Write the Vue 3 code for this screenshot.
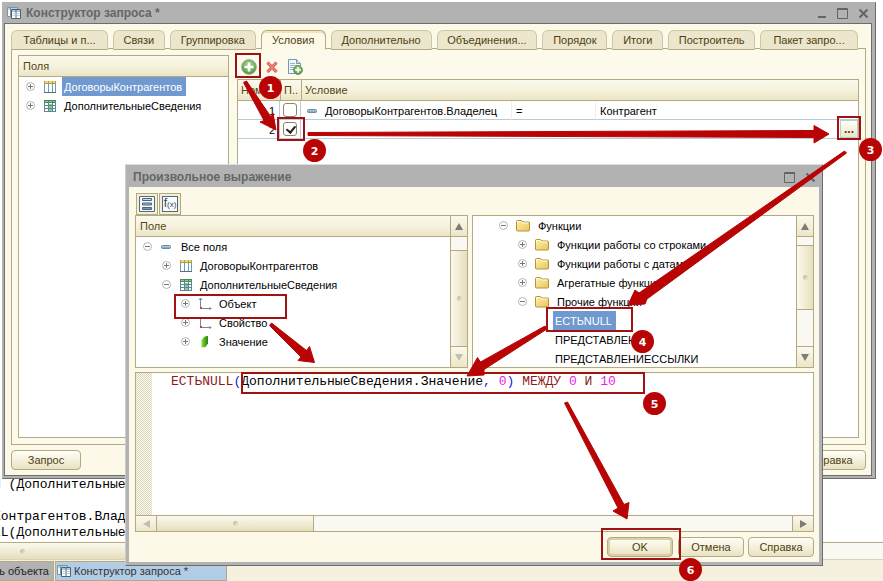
<script setup>
import { ref } from 'vue'

const tabs = ['Таблицы и п...', 'Связи', 'Группировка', 'Условия', 'Дополнительно', 'Объединения...', 'Порядок', 'Итоги', 'Построитель', 'Пакет запро...']
const activeTab = ref('Условия')

const sourceFields = [
  { text: 'ДоговорыКонтрагентов', icon: 'table', mark: 'plus', level: 0, selected: true },
  { text: 'ДополнительныеСведения', icon: 'grid', mark: 'plus', level: 0 }
]

const fields = [
  { text: 'Все поля', icon: 'dash', mark: 'minus', level: 0 },
  { text: 'ДоговорыКонтрагентов', icon: 'table', mark: 'plus', level: 1 },
  { text: 'ДополнительныеСведения', icon: 'grid', mark: 'minus', level: 1 },
  { text: 'Объект', icon: 'axis', mark: 'plus', level: 2 },
  { text: 'Свойство', icon: 'axis', mark: 'plus', level: 2 },
  { text: 'Значение', icon: 'leaf', mark: 'plus', level: 2 }
]

const functions = [
  { text: 'Функции', icon: 'folder', mark: 'minus', level: 0 },
  { text: 'Функции работы со строками', icon: 'folder', mark: 'plus', level: 1 },
  { text: 'Функции работы с датами', icon: 'folder', mark: 'plus', level: 1 },
  { text: 'Агрегатные функции', icon: 'folder', mark: 'plus', level: 1 },
  { text: 'Прочие функции', icon: 'folder', mark: 'minus', level: 1 },
  { text: 'ЕСТЬNULL', level: 2, selected: true },
  { text: 'ПРЕДСТАВЛЕНИЕ', level: 2 },
  { text: 'ПРЕДСТАВЛЕНИЕССЫЛКИ', level: 2 }
]

const useFirst = ref(false)
const useSecond = ref(true)

const frames = [
  [236, 54, 24, 23], [278, 118, 26, 22], [838, 117, 22, 22], [175, 295, 111, 23],
  [547, 308, 85, 23], [242, 373, 402, 20], [602, 529, 78, 30]
]

const arrows = [
  '243.5,82.5 246.5,81 271,117 273,113 276,130 260,122 264,120.5',
  '308,132.5 814,130.5 814,125.5 829,134 814,143 814,137.5 308,135.5',
  '844.5,151 846.5,153 647,299 645,304 628,305 635,290 639,293',
  '545,326 547,329 484,369.5 484,375 467,376 477.5,357.5 480.5,362',
  '269.5,325.5 271.5,323 306.5,350.5 309.5,346.5 314.5,362.5 298,360.5 301,357',
  '564.5,403 567.5,402 624,504.5 629,502.5 627,519 613,511 618,508'
]

const badges = [
  [270.5, 87.5], [314.5, 150.5], [870.5, 149.5], [642.5, 341.5], [654.5, 403.5], [690.5, 569.5]
]
</script>

<template>
  <div class="desktop">
    <svg class="defs" aria-hidden="true">
      <defs>
        <linearGradient id="g-blue" x1="0" y1="0" x2="0" y2="1"><stop offset="0" stop-color="#cfe2ee" /><stop offset="1" stop-color="#6b93af" /></linearGradient>
        <linearGradient id="g-fold" x1="0" y1="0" x2="1" y2="1"><stop offset="0" stop-color="#fff0a8" /><stop offset="1" stop-color="#e8c65a" /></linearGradient>
        <radialGradient id="g-green" cx=".5" cy=".35" r=".65"><stop offset="0" stop-color="#b4dc98" /><stop offset="1" stop-color="#4d9440" /></radialGradient>
        <linearGradient id="g-leaf" x1="0" y1="0" x2="1" y2="0"><stop offset="0" stop-color="#8fdc3c" /><stop offset=".55" stop-color="#4fae1c" /><stop offset="1" stop-color="#2c7d10" /></linearGradient>
      </defs>
      <symbol id="i-plus" viewBox="0 0 9 9"><circle cx="4.500" cy="4.500" r="4" fill="#fff" stroke="#b4b4b4" /><path d="M2 4.500h5M4.500 2v5" stroke="#777" /></symbol>
      <symbol id="i-minus" viewBox="0 0 9 9"><circle cx="4.500" cy="4.500" r="4" fill="#fff" stroke="#b4b4b4" /><path d="M2 4.500h5" stroke="#777" /></symbol>
      <symbol id="i-dash" viewBox="0 0 14 14"><rect x="1.500" y="5.500" width="9" height="3" rx="1" fill="url(#g-blue)" stroke="#6a8ca4" /></symbol>
      <symbol id="i-table" viewBox="0 0 14 14"><path d="M1 3h12v10H1z" fill="#fff" /><path d="M1.500 3v10M5.500 3v10M9.500 3v10M12.500 3v10" stroke="#6f9bb0" /><path d="M1 12.500h12" stroke="#4f7385" /><path d="M1 1h12v3H1z" fill="#b39c4a" /><path d="M2 1h3v2H2zM6 1h3v2H6zM10 1h2v2h-2z" fill="#f0d870" /></symbol>
      <symbol id="i-grid" viewBox="0 0 14 14"><path d="M1 1h12v12H1z" fill="#fff" /><path d="M1 1h12v3H1z" fill="#438a54" /><path d="M2 2h3v1H2zM6 2h3v1H6zM10 2h2v1h-2z" fill="#8ccc92" /><path d="M1.500 3v10M5.500 3v10M9.500 3v10M12.500 3v10M1 6.500h12M1 9.500h12M1 12.500h12" stroke="#5d8790" /><path d="M6 5h3v1H6zM6 7h3v2H6zM6 10h3v2H6z" fill="#8fc99a" /></symbol>
      <symbol id="i-axis" viewBox="0 0 14 14"><path d="M2.500 1v10M3 11.500h10M1 3l1.500-2L4 3M11.500 10l1.500 1.500-1.500 1.500" fill="none" stroke="#7b8994" /><path d="M2 10h2v2H2z" fill="#d8402c" /></symbol>
      <symbol id="i-leaf" viewBox="0 0 14 14"><path d="M3.500 5l3-3.500 3.500-.5v7.500l-2.500 3.500-4 .5z" fill="url(#g-leaf)" /></symbol>
      <symbol id="i-folder" viewBox="0 0 16 14"><path d="M1.500 2.500q0-1 1-1h4l1.500 1.500h5.500q1 0 1 1v7q0 1-1 1h-11q-1 0-1-1z" fill="url(#g-fold)" stroke="#b8913c" /><path d="M2.500 4.500V2.500H6l1.500 1.500h5.500" fill="none" stroke="#fffbe0" /></symbol>
      <symbol id="i-query" viewBox="0 0 16 14"><path d="M1.500 1.500h10v9h-10z" fill="#f4f8fb" stroke="#7d93a3" /><path d="M2 2h9v2H2z" fill="#b8d0e2" /><path d="M4.500 2v8" stroke="#7d93a3" /><path d="M5.500 3.500h9v9h-9z" fill="#fff" stroke="#4c6576" /><path d="M6 4h8v2H6z" fill="#a9c6dc" /><path d="M10 4v8" stroke="#4c6576" /><path d="M6.500 7.500h3M11 7.500h3M6.500 9.500h3M11 9.500h3" stroke="#c2d2dd" /></symbol>
      <symbol id="i-add" viewBox="0 0 16 16"><circle cx="8" cy="8" r="7.300" fill="url(#g-green)" stroke="#7fa876" /><path d="M8 3.500v9M3.500 8h9" stroke="#fff" stroke-width="2.600" /></symbol>
      <symbol id="i-delete" viewBox="0 0 14 14"><path d="M2.500 2.500l9 9.500M11.500 2.500l-9 9.500" stroke="#d65346" stroke-width="3.200" /><path d="M2.500 2.500l9 9.500M11.500 2.500l-9 9.500" stroke="#ee8577" stroke-width="1.600" /></symbol>
      <symbol id="i-copy" viewBox="0 0 16 16"><path d="M1.500.5h8l4 4v10h-12z" fill="#f3f8fb" stroke="#7597aa" /><path d="M9.500.5v4h4" fill="#cfdfe8" stroke="#7597aa" /><path d="M3 4.500h5M3 6.500h8M3 8.500h6M3 10.500h5" stroke="#93b5c8" /><circle cx="11" cy="11" r="4.400" fill="url(#g-green)" stroke="#5f8c56" /><path d="M11 8.200v5.600M8.200 11h5.600" stroke="#fff" stroke-width="1.600" /></symbol>
      <symbol id="i-max" viewBox="0 0 11 11"><path d="M.5.5h10v10H.5zM0 1.500h11" fill="none" stroke="#646464" /></symbol>
      <symbol id="i-min" viewBox="0 0 11 11"><path d="M2 9h8" stroke="#646464" stroke-width="2" /></symbol>
      <symbol id="i-close" viewBox="0 0 11 11"><path d="M1.500 1.500l8 8M9.500 1.500l-8 8" stroke="#646464" stroke-width="2" /></symbol>
    </svg>

    <main class="backdrop">
      <pre class="source">И (ДополнительныеСведения

Контрагентов.Владелец
LL(ДополнительныеСведения</pre>
      <div class="hbar wide"><div class="thumb grip"></div></div>
    </main>
    <nav class="taskbar">
      <button class="task">ь объекта</button>
      <button class="task current"><svg class="ico16"><use href="#i-query" /></svg>Конструктор запроса *</button>
    </nav>

    <section class="window builder">
      <header class="title">
        <svg class="ico16"><use href="#i-query" /></svg>
        <h1>Конструктор запроса *</h1>
        <button class="sys" aria-label="Свернуть"><svg><use href="#i-min" /></svg></button>
        <button class="sys" aria-label="Развернуть"><svg><use href="#i-max" /></svg></button>
        <button class="sys" aria-label="Закрыть"><svg><use href="#i-close" /></svg></button>
      </header>
      <div class="client">
        <div class="tabs" role="tablist">
          <button v-for="t in tabs" :key="t" role="tab" class="tab" :class="{ active: t === activeTab }" :aria-selected="t === activeTab" @click="activeTab = t">{{ t }}</button>
        </div>
        <div class="page">
          <div class="pane source-pane">
            <div class="head">Поля</div>
            <ul class="tree">
              <li v-for="n in sourceFields" :key="n.text" :class="'level' + n.level">
                <svg class="mark"><use :href="'#i-' + n.mark" /></svg>
                <svg class="ico"><use :href="'#i-' + n.icon" /></svg>
                <span class="label" :class="{ selected: n.selected }">{{ n.text }}</span>
              </li>
            </ul>
          </div>
          <div class="conditions">
            <div class="toolbar">
              <button class="tool" aria-label="Добавить"><svg class="i16"><use href="#i-add" /></svg></button>
              <button class="tool" aria-label="Удалить"><svg class="i14"><use href="#i-delete" /></svg></button>
              <button class="tool" aria-label="Скопировать"><svg class="i16"><use href="#i-copy" /></svg></button>
            </div>
            <div class="pane table-pane">
              <table>
                <colgroup><col class="c-num"><col class="c-check"><col class="c-field"><col class="c-op"><col></colgroup>
                <thead>
                  <tr><th>Номер</th><th>П..</th><th colspan="3">Условие</th></tr>
                </thead>
                <tbody>
                  <tr>
                    <td class="num">1</td>
                    <td class="check"><input v-model="useFirst" type="checkbox" aria-label="Произвольное, строка 1"></td>
                    <td class="split"><div class="cell"><svg class="ico"><use href="#i-dash" /></svg>ДоговорыКонтрагентов.Владелец</div></td>
                    <td class="split">=</td>
                    <td>Контрагент</td>
                  </tr>
                  <tr>
                    <td class="num">2</td>
                    <td class="check"><input v-model="useSecond" type="checkbox" aria-label="Произвольное, строка 2"></td>
                    <td colspan="3" class="edit"><button class="choose" aria-label="Выбрать">...</button></td>
                  </tr>
                </tbody>
              </table>
            </div>
          </div>
        </div>
        <footer class="actions spread">
          <button class="btn">Запрос</button>
          <button class="btn">Справка</button>
        </footer>
      </div>
    </section>

    <section class="window dialog">
      <header class="title">
        <h2>Произвольное выражение</h2>
        <button class="sys" aria-label="Развернуть"><svg><use href="#i-max" /></svg></button>
        <button class="sys" aria-label="Закрыть"><svg><use href="#i-close" /></svg></button>
      </header>
      <div class="client">
        <div class="toggles">
          <button class="toggle" aria-label="Поля">
            <svg viewBox="0 0 16 16"><path d="M.5.5h15v15H.5z" fill="#f6f8fa" stroke="#56697a" /><g fill="url(#g-blue)" stroke="#47667c"><path d="M3.500 2.500h9v2h-9zM3.500 7h9v2h-9zM3.500 11.500h9v2h-9z" /></g></svg>
          </button>
          <button class="toggle fx" aria-label="Функции"><span>f<small>(x)</small></span></button>
        </div>
        <div class="lists">
          <div class="pane fields-pane">
            <div class="main">
              <div class="head">Поле</div>
              <ul class="tree">
                <li v-for="n in fields" :key="n.text" :class="'level' + n.level">
                  <svg class="mark"><use :href="'#i-' + n.mark" /></svg>
                  <svg class="ico"><use :href="'#i-' + n.icon" /></svg>
                  <span class="label">{{ n.text }}</span>
                </li>
              </ul>
            </div>
            <div class="vbar off"><i class="up"></i><div class="track"><div class="thumb grip late"></div></div><i class="down"></i></div>
          </div>
          <div class="pane functions-pane">
            <ul class="tree main">
              <li v-for="n in functions" :key="n.text" :class="['level' + n.level, { leaf: !n.icon }]">
                <template v-if="n.icon">
                  <svg class="mark"><use :href="'#i-' + n.mark" /></svg>
                  <svg class="ico16"><use href="#i-folder" /></svg>
                </template>
                <span class="label" :class="{ selected: n.selected }">{{ n.text }}</span>
              </li>
            </ul>
            <div class="vbar"><i class="up"></i><div class="track"><div class="thumb grip early"></div></div><i class="down"></i></div>
          </div>
        </div>
        <div class="pane editor">
          <div class="text">
            <div class="gutter"></div>
            <pre class="code" contenteditable="true" spellcheck="false" role="textbox" aria-label="Выражение"><b>ЕСТЬNULL</b><i>(</i>ДополнительныеСведения.Значение<i>,</i> <em>0</em><i>)</i> <b>МЕЖДУ</b> <em>0</em> <b>И</b> <em>10</em></pre>
          </div>
          <div class="hbar"><i class="left"></i><div class="track"><div class="thumb grip"></div></div><i class="right"></i></div>
        </div>
        <footer class="actions">
          <button class="btn default">OK</button>
          <button class="btn">Отмена</button>
          <button class="btn">Справка</button>
        </footer>
      </div>
    </section>

    <svg class="notes" viewBox="0 0 883 581">
      <rect v-for="(f, i) in frames" :key="'f' + i" :x="f[0]" :y="f[1]" :width="f[2]" :height="f[3]" />
      <polygon v-for="(a, i) in arrows" :key="'a' + i" :points="a" />
      <g v-for="(b, i) in badges" :key="'b' + i">
        <circle :cx="b[0]" :cy="b[1]" r="11.500" />
        <text :x="b[0]" :y="b[1] + 4">{{ i + 1 }}</text>
      </g>
    </svg>
  </div>
</template>

<style>
body { overflow: hidden; }
</style>

<style scoped>
* { box-sizing: border-box; }
.desktop {
  position: relative;
  display: flex;
  flex-direction: column;
  min-height: 100vh;
  overflow: hidden;
  background: #fff;
  color: #000;
  font: 11px/19px "Liberation Sans", Arial, sans-serif;
}
.defs { position: absolute; width: 0; height: 0; }
button { font: inherit; color: #4d3f12; padding: 0; margin: 0; border: 0; background: none; white-space: nowrap; }
h1, h2 { margin: 0; font-size: 12px; font-weight: bold; }
ul { list-style: none; margin: 0; padding: 0; }
pre { margin: 0; }
.ico { width: 14px; height: 14px; flex: none; }
.ico16 { width: 16px; height: 14px; flex: none; }

.backdrop { flex: 1; display: flex; flex-direction: column; justify-content: flex-end; overflow: hidden; }
.source { margin-left: -7px; font: 13px/16px "Liberation Mono", monospace; padding-bottom: 1px; }
.taskbar { display: flex; gap: 1px; height: 21px; padding-top: 1px; background: #f5f1de; }
.task { display: flex; align-items: center; justify-content: flex-end; width: 54px; padding-right: 4px; border: 1px solid #b3aa82; border-left: 0; background: #b2b2b2; color: #222; }
.task.current { justify-content: flex-start; gap: 2px; width: 172px; border-left: 1px solid #b3aa82; background: #b2cce6; color: #333; }

.window { position: absolute; display: flex; flex-direction: column; background: #b2b2b2; border: 1px solid #b2b2b2; border-right-color: #6e6e6e; border-bottom-color: #6e6e6e; }
.builder { left: 2px; right: 7px; top: 2px; bottom: 102px; padding: 0 3px 2px 1px; }
.dialog { left: 125px; right: 60px; top: 164px; bottom: 15px; padding: 0 3px 3px; border-top-color: #ddd; border-left-color: #ccc; }
.title { display: flex; align-items: center; height: 20px; padding: 0 1px 0 2px; gap: 5px; color: #666; }
.dialog .title { height: 22px; padding-left: 4px; padding-top: 2px; }
.title h1, .title h2 { flex: 1; }
.title .ico16 { margin-right: -1px; }
.sys { width: 16px; height: 14px; display: grid; place-items: center; }
.sys svg { width: 11px; height: 11px; }
.client { flex: 1; display: flex; flex-direction: column; min-height: 0; background: #fcf9e9; }
.builder .client { border: 1px solid #6e6e6e; padding: 6px 5px 5px 6px; }
.dialog .client { padding: 6px 5px 5px 6px; }

.tabs { display: grid; grid-template-columns: 97fr 52fr 86fr 65fr 101fr 101fr 65fr 51fr 87fr 98fr; gap: 5px; height: 19px; padding-right: 8px; position: relative; margin-bottom: -1px; }
.tab { border: 1px solid #cfc7a4; border-radius: 6px 6px 0 0; border-bottom-color: #b3aa82; background: #ece6cc; line-height: 18px; text-align: center; }
.tab.active { border-color: #b3aa82; border-bottom-color: #fcf9e9; background: #fcf9e9; box-shadow: inset 0 2px #f6e3b4; }
.page { flex: 1; display: flex; gap: 8px; min-height: 0; border: 1px solid #b3aa82; padding: 6px; background: #fcfaeb; }
.pane { border: 1px solid #b3aa82; background: #fff; overflow: hidden; }
.source-pane { flex: 0 0 211px; }
.conditions { flex: 1; display: flex; flex-direction: column; min-width: 0; }
.toolbar { display: flex; align-items: center; gap: 3px; height: 24px; padding-left: 2px; }
.tool { width: 20px; height: 24px; display: grid; place-items: center; }
.i16 { width: 16px; height: 16px; }
.i14 { width: 14px; height: 14px; }
.table-pane { flex: 1; }
.head, th { height: 21px; line-height: 20px; font-weight: normal; text-align: left; color: #54461a; padding: 0 4px; border-bottom: 1px solid #b3aa82; background: linear-gradient(#fbf9ec, #f6f2dc 50%, #ece6c6); }

.tree li { display: flex; align-items: center; height: 19px; padding-left: 7px; }
.tree .level1 { padding-left: 26px; }
.tree .level2 { padding-left: 45px; }
.mark { width: 9px; height: 9px; flex: none; margin-right: 8px; }
.label { padding: 0 2px; margin-left: 5px; height: 19px; line-height: 21px; white-space: nowrap; }
.label.selected { background: #6f99cf; color: #fff; padding-right: 4px; }
.functions-pane .tree li { padding-left: 26px; }
.functions-pane .tree .level1 { padding-left: 45px; }
.functions-pane .tree .leaf { padding-left: 75px; }
.functions-pane .ico16 { margin-left: -1px; }

table { width: 100%; border-collapse: separate; border-spacing: 0; table-layout: fixed; }
.c-num { width: 42px; }
.c-check { width: 21px; }
.c-field { width: 211px; }
.c-op { width: 84px; }
th { padding: 0 3px; white-space: nowrap; overflow: hidden; }
th + th { border-left: 1px solid #b3aa82; }
td { height: 19px; line-height: 16px; padding: 2px 4px 0; border-bottom: 1px solid #b9ccda; white-space: nowrap; }
td.num { text-align: right; border-right: 1px solid #b9ccda; }
td.check { padding: 0; text-align: center; border-right: 1px solid #b9ccda; }
td.split { border-right: 1px solid #eceff2; }
td.edit { padding: 0; text-align: right; }
.cell { display: flex; align-items: center; gap: 5px; padding-left: 1px; }
input[type="checkbox"] { appearance: none; display: block; width: 14px; height: 14px; margin: 0 auto; border: 1px solid #8f8763; border-radius: 3px; background: #fff; }
input[type="checkbox"]:checked::after { content: ""; display: block; width: 4px; height: 7px; margin: 1px 0 0 4px; border: solid #222; border-width: 0 2px 2px 0; transform: rotate(40deg); }
.choose { display: block; width: 18px; height: 18px; margin-left: auto; border: 1px solid #b9ccda; background: linear-gradient(#fffef6, #ece6c6); font-weight: bold; font-size: 12px; line-height: 16px; }

.actions { display: flex; justify-content: flex-end; gap: 4px; padding-top: 5px; }
.actions.spread { justify-content: space-between; }
.btn { width: 66px; height: 20px; border: 1px solid #b3aa82; border-radius: 4px; background: linear-gradient(#fffef8, #f5f1dc 50%, #e9e2c2); line-height: 18px; }
.spread .btn { width: 70px; }
.btn.default { box-shadow: inset 0 0 0 2px #d9d0a8; margin-right: 1px; }

.toggles { display: flex; gap: 1px; padding-left: 1px; }
.toggle { width: 22px; height: 22px; display: grid; place-items: center; border: 1px solid #b3aa82; background: #f3eed6; }
.toggle svg { width: 16px; height: 16px; }
.fx span { display: block; width: 16px; height: 16px; border: 1px solid #56697a; background: #f8f9fa; color: #33475c; font-size: 12px; line-height: 13px; text-align: center; }
.fx small { font-size: 8px; }
.lists { display: grid; grid-template-columns: 333fr 342fr; gap: 4px; }
.lists .pane { display: flex; height: 153px; }
.main { flex: 1; min-width: 0; }
.vbar { width: 17px; display: flex; flex-direction: column; border-left: 1px solid #b3aa82; background: #f9f8f2; }
.vbar > i, .hbar > i { flex: none; display: grid; place-items: center; background: linear-gradient(#fbf9ee, #ece6c8); }
.vbar > i { height: 20px; }
.vbar > i::after, .hbar > i::after { content: ""; border: 4px solid transparent; }
.vbar .up::after { border-bottom: 7px solid #7d7b74; border-top: 0; }
.vbar .down::after { border-top: 7px solid #7d7b74; border-bottom: 0; }
.vbar.off .down::after { border-top-color: #c4c0ae; }
.track { flex: 1; display: flex; border: solid #b3aa82; border-width: 1px 0; min-height: 0; }
.vbar .track { flex-direction: column; }
.thumb { position: relative; border: 1px solid #b3aa82; }
.vbar .thumb { width: 100%; border-width: 1px 0; background: linear-gradient(90deg, #fbf9ee, #e6dfbc); }
.vbar .late { flex: 1; margin-top: 13px; border-bottom: 0; }
.vbar .early { height: 65px; margin-top: 8px; }
.grip { display: grid; place-items: center; }
.grip::after { content: ""; width: 5px; height: 5px; border-radius: 50%; background: linear-gradient(135deg, #bdb695, #efe9cf); }
.editor { flex: 1; display: flex; flex-direction: column; min-height: 0; margin-top: 4px; }
.text { flex: 1; display: flex; }
.gutter { width: 16px; background: repeating-conic-gradient(#dcd8c0 0 25%, #fbf9ec 0 50%) 0 0 / 2px 2px; }
.code { flex: 1; padding-left: 19px; font: 13px/17px "Liberation Mono", monospace; color: #000; outline: 0; }
.code b { font-weight: normal; color: #8b1a1a; }
.code i { font-style: normal; color: #1a1ae0; }
.code em { font-style: normal; color: #e81ee8; }
.hbar { display: flex; height: 16px; border-top: 1px solid #b3aa82; background: #f9f8f2; }
.hbar > i { width: 20px; }
.hbar .left::after { border-right: 7px solid #c4c0ae; border-left: 0; }
.hbar .right::after { border-left: 7px solid #7d7b74; border-right: 0; }
.hbar .track { border-width: 0 1px; }
.hbar .thumb { flex: 0 0 157px; border-width: 0 1px 0 0; background: linear-gradient(#fbf9ee, #e6dfbc); }
.hbar.wide { height: 18px; border-bottom: 1px solid #d8d4bc; flex: none; }
.hbar.wide .thumb { flex: 0 0 20%; justify-items: start; padding-left: 20px; }

.notes { position: absolute; left: 0; top: 0; width: 883px; height: 581px; pointer-events: none; }
.notes rect { fill: none; stroke: #a01212; stroke-width: 2px; }
.notes polygon { fill: #b80404; stroke: #b80404; stroke-linejoin: round; }
.notes circle { fill: #b80404; }
.notes text { fill: #fff; font: bold 11px "DejaVu Sans", sans-serif; text-anchor: middle; }
</style>
